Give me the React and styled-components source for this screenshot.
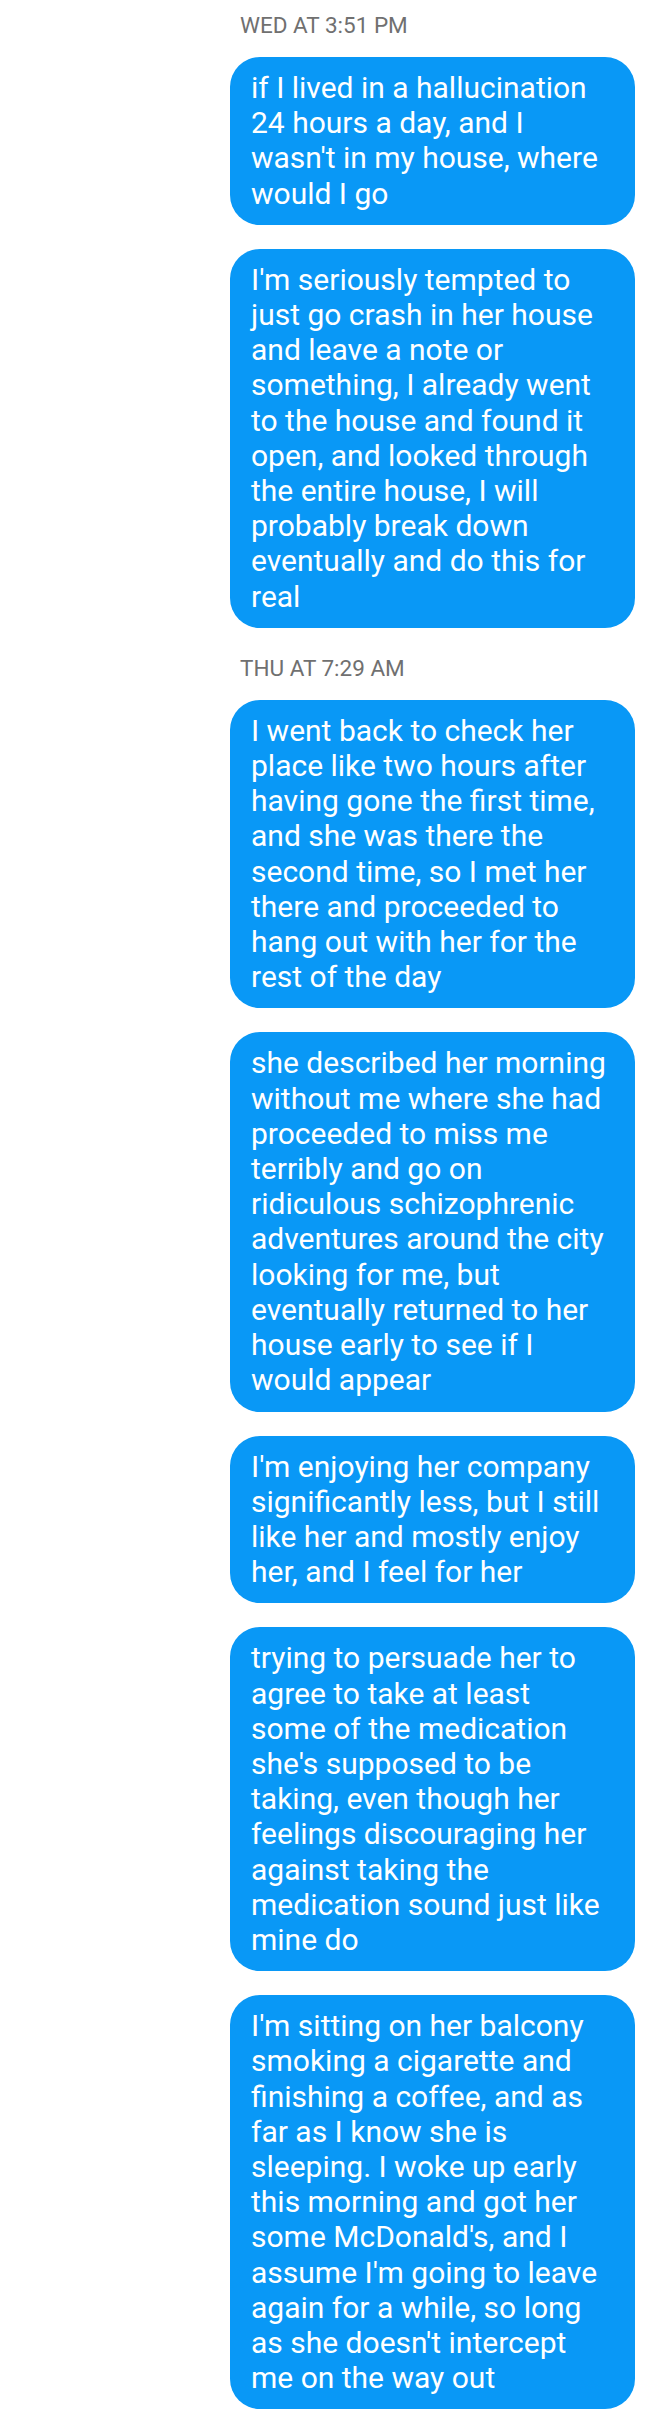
import styled, { createGlobalStyle } from "styled-components";

const GlobalStyle = createGlobalStyle`
  body {
    margin: 0;
    background: #ffffff;
    font-family: Roboto, "Noto Sans", sans-serif;
  }
`;

const Thread = styled.div`
  width: 648px;
  padding: 9px 13px 17px 0;
  box-sizing: border-box;
  display: flex;
  flex-direction: column;
  align-items: flex-end;
`;

const Stamp = styled.div`
  width: 405px;
  box-sizing: border-box;
  padding-left: 10px;
  height: 32px;
  line-height: 32px;
  margin-bottom: 16px;
  font-size: 22.5px;
  color: #707070;
  text-transform: uppercase;
`;

const Bubble = styled.div`
  width: 405px;
  box-sizing: border-box;
  padding: 13px 14px 14px 21px;
  margin-bottom: 24px;
  border-radius: 30px;
  background: #0998f6;
  color: #ffffff;
  font-size: 30px;
  line-height: 35.2px;
  white-space: pre-line;
`;

const messages = [
  { stamp: "Wed at 3:51 PM" },
  { text: "if I lived in a hallucination\n24 hours a day, and I\nwasn't in my house, where\nwould I go" },
  { text: "I'm seriously tempted to\njust go crash in her house\nand leave a note or\nsomething, I already went\nto the house and found it\nopen, and looked through\nthe entire house, I will\nprobably break down\neventually and do this for\nreal" },
  { stamp: "Thu at 7:29 AM" },
  { text: "I went back to check her\nplace like two hours after\nhaving gone the first time,\nand she was there the\nsecond time, so I met her\nthere and proceeded to\nhang out with her for the\nrest of the day" },
  { text: "she described her morning\nwithout me where she had\nproceeded to miss me\nterribly and go on\nridiculous schizophrenic\nadventures around the city\nlooking for me, but\neventually returned to her\nhouse early to see if I\nwould appear" },
  { text: "I'm enjoying her company\nsignificantly less, but I still\nlike her and mostly enjoy\nher, and I feel for her" },
  { text: "trying to persuade her to\nagree to take at least\nsome of the medication\nshe's supposed to be\ntaking, even though her\nfeelings discouraging her\nagainst taking the\nmedication sound just like\nmine do" },
  { text: "I'm sitting on her balcony\nsmoking a cigarette and\nfinishing a coffee, and as\nfar as I know she is\nsleeping. I woke up early\nthis morning and got her\nsome McDonald's, and I\nassume I'm going to leave\nagain for a while, so long\nas she doesn't intercept\nme on the way out" },
];

export default function App() {
  return (
    <>
      <GlobalStyle />
      <Thread>
        {messages.map((m, i) =>
          m.stamp ? <Stamp key={i}>{m.stamp}</Stamp> : <Bubble key={i}>{m.text}</Bubble>
        )}
      </Thread>
    </>
  );
}
